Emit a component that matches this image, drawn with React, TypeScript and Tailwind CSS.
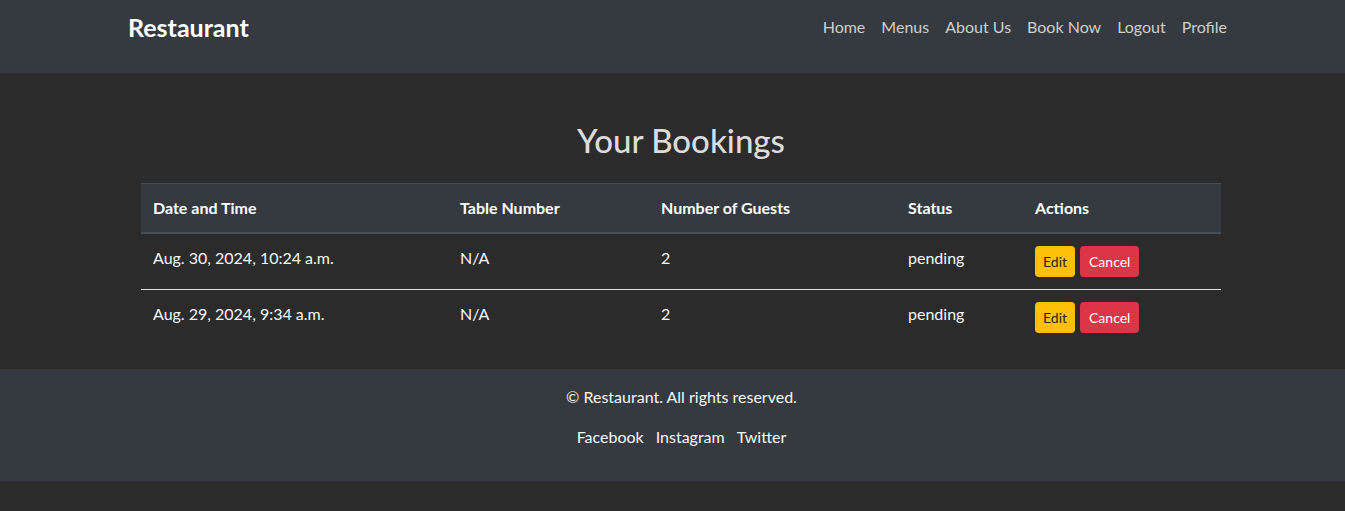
import React from "react";

const bookings = [
  { when: "Aug. 30, 2024, 10:24 a.m.", table: "N/A", guests: "2", status: "pending" },
  { when: "Aug. 29, 2024, 9:34 a.m.", table: "N/A", guests: "2", status: "pending" },
];

const navLinks = ["Home", "Menus", "About Us", "Book Now", "Logout", "Profile"];

export default function App() {
  return (
    <div
      className="min-h-screen bg-[#2b2b2b] text-[#f8f9fa]"
      style={{ fontFamily: "Lato, 'Noto Sans', sans-serif" }}
    >
      <header className="h-[73px] bg-[#343a40]">
        <div className="mx-auto flex w-[1140px] items-center justify-between pl-[25.5px] pr-[7.5px] pt-[12px]">
          <a className="text-[25px] font-bold leading-[30px] text-white">Restaurant</a>
          <nav className="flex">
            {navLinks.map((l) => (
              <a key={l} className="px-2 text-base leading-6 text-[#cfcfca]">
                {l}
              </a>
            ))}
          </nav>
        </div>
      </header>

      <main className="pb-[24px] pl-[141px] pr-[124px] pt-[48px]">
        <h2 className="mb-6 text-center text-[33px] font-medium leading-[38px] text-[#dcdcdc]">
          Your Bookings
        </h2>
        <table className="w-[1080px] table-fixed border-collapse text-base">
          <colgroup>
            <col className="w-[307px]" />
            <col className="w-[201px]" />
            <col className="w-[247px]" />
            <col className="w-[127px]" />
            <col className="w-[198px]" />
          </colgroup>
          <thead>
            <tr className="border-b-2 border-t border-b-[#454d55] border-t-[#454d55] bg-[#343a40] text-left">
              {["Date and Time", "Table Number", "Number of Guests", "Status", "Actions"].map((h) => (
                <th key={h} className="p-3 font-bold leading-6 text-white">
                  {h}
                </th>
              ))}
            </tr>
          </thead>
          <tbody>
            {bookings.map((b, i) => (
              <tr key={i} className={i === 0 ? "border-b border-[#dee2e6]" : ""}>
                <td className="p-3 align-top leading-6">{b.when}</td>
                <td className="p-3 align-top leading-6">{b.table}</td>
                <td className="p-3 align-top leading-6">{b.guests}</td>
                <td className="p-3 align-top leading-6">{b.status}</td>
                <td className="p-3 align-top">
                  <div className="flex gap-[5px]">
                    <button className="h-[31px] rounded-[4px] bg-[#ffc107] px-2 text-sm text-[#212529]">Edit</button>
                    <button className="h-[31px] rounded-[4px] bg-[#dc3545] px-[9px] text-sm text-white">Cancel</button>
                  </div>
                </td>
              </tr>
            ))}
          </tbody>
        </table>
      </main>

      <footer className="bg-[#343a40] py-4 pl-[18px] text-center text-base leading-6 text-[#f8f9fa]">
        <p className="mb-4">© Restaurant. All rights reserved.</p>
        <p className="mb-4 flex justify-center gap-3">
          <a>Facebook</a>
          <a>Instagram</a>
          <a>Twitter</a>
        </p>
      </footer>
    </div>
  );
}
